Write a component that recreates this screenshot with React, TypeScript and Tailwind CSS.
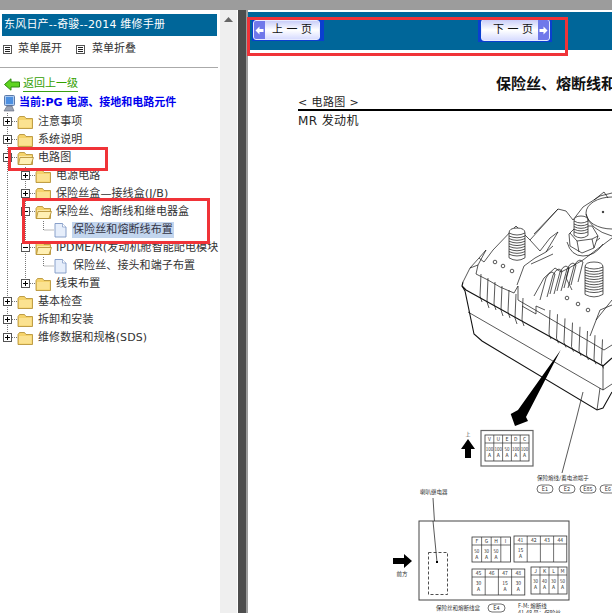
const FONT = "font-['DejaVu_Sans','Noto_Sans_CJK_SC',sans-serif]";

function Toggle({ x, open }: { x: number; open: boolean }) {
  return (
    <g>
      <rect x={x + 0.5} y={4.5} width={8} height={8} fill="#fff" stroke="#555" />
      <path d={`M${x + 2} 8.5H${x + 7}`} stroke="#000" />
      {!open && <path d={`M${x + 4.5} 6V11`} stroke="#000" />}
    </g>
  );
}

function Folder({ x, open }: { x: number; open: boolean }) {
  return (
    <g>
      <path d={`M${x} 5.5l1.5-2h5l1.5 2h6.5v10h-14.5z`} fill="#f5d36b" stroke="#b08a2c" strokeWidth="0.8" />
      <path d={`M${x + 1} 7h12.5v7.5h-12.5z`} fill={open ? "#fbe9a8" : "#fbe291"} />
      {open && <path d={`M${x + 2} 8.5h13.5l-2.5 7h-12.5z`} fill="#fff0b4" stroke="#b08a2c" strokeWidth="0.8" />}
    </g>
  );
}

function Doc({ x }: { x: number }) {
  return (
    <g>
      <path d={`M${x} 2.5h7.5l3.5 3.5v10h-11z`} fill="#e6eefb" stroke="#7d96c4" strokeWidth="0.9" />
      <path d={`M${x + 7.5} 2.5v3.5h3.5`} fill="#fff" stroke="#7d96c4" strokeWidth="0.7" />
    </g>
  );
}

type Row = {
  label: string;
  depth: 1 | 2 | 3;
  open?: boolean;
  last1?: boolean;
  last2?: boolean;
  selected?: boolean;
};

const rows: Row[] = [
  { label: "注意事项", depth: 1 },
  { label: "系统说明", depth: 1 },
  { label: "电路图", depth: 1, open: true },
  { label: "电源电路", depth: 2 },
  { label: "保险丝盒—接线盒(J/B)", depth: 2 },
  { label: "保险丝、熔断线和继电器盒", depth: 2, open: true },
  { label: "保险丝和熔断线布置", depth: 3, selected: true },
  { label: "IPDME/R(发动机舱智能配电模块", depth: 2, open: true },
  { label: "保险丝、接头和端子布置", depth: 3 },
  { label: "线束布置", depth: 2, last2: true },
  { label: "基本检查", depth: 1 },
  { label: "拆卸和安装", depth: 1 },
  { label: "维修数据和规格(SDS)", depth: 1, last1: true },
];

const dots = { stroke: "#777", strokeDasharray: "1 1" };

function TreeRow({ r }: { r: Row }) {
  const width = r.depth === 1 ? 36 : r.depth === 2 ? 54 : 71;
  return (
    <div className="flex h-[18px] items-center whitespace-nowrap">
      <svg width={width} height={18} viewBox={`0 0 ${width} 18`} className="shrink-0">
        <path d={r.last1 ? "M7.5 0V9" : "M7.5 0V18"} {...dots} fill="none" />
        {r.depth === 1 && <path d="M12 8.5H18" {...dots} />}
        {r.depth > 1 && <path d={r.last2 ? "M25.5 0V9" : "M25.5 0V18"} {...dots} />}
        {r.depth === 2 && <path d="M30 8.5H36" {...dots} />}
        {r.depth === 3 && <path d="M43.5 0V9H54" {...dots} fill="none" />}
        {r.depth === 1 && <Toggle x={3} open={!!r.open} />}
        {r.depth === 2 && <Toggle x={21} open={!!r.open} />}
        {r.depth === 1 && <Folder x={18} open={!!r.open} />}
        {r.depth === 2 && <Folder x={36} open={!!r.open} />}
        {r.depth === 3 && <Doc x={55} />}
      </svg>
      <span
        className={`ml-[1px] px-[1px] text-[11px] leading-[16px] tracking-[0.1px] ${r.selected ? "bg-[#c2d5ee] text-[#334]" : "text-[#333]"}`}
      >
        {r.label}
      </span>
    </div>
  );
}

function MenuIcon() {
  return (
    <svg width="9" height="9" viewBox="0 0 9 9" className="block shrink-0">
      <rect x="0.5" y="0.5" width="8" height="8" fill="#fff" stroke="#555" />
      <path d="M2 2.5H7M2 4.5H7M2 6.5H7" stroke="#222" />
    </svg>
  );
}

function NavArrow({ dir }: { dir: "l" | "r" }) {
  return (
    <div className="flex h-full w-[11px] shrink-0 items-center justify-center bg-[#6f78ea]">
      <svg width="9" height="9" viewBox="0 0 9 9">
        <path d={dir === "l" ? "M0.5 4.5L4.5 0.5V3H8.5V6H4.5V8.5Z" : "M8.5 4.5L4.5 0.5V3H0.5V6H4.5V8.5Z"} fill="#fff" />
      </svg>
    </div>
  );
}

const S = { fill: "none", stroke: "#111", strokeWidth: 0.7 };

function Bolt({ x, y, w, n }: { x: number; y: number; w: number; n: number }) {
  const threads = Array.from({ length: n }, (_, i) => i);
  return (
    <g {...S}>
      <path d={`M${x} ${y + 6}q0 -5 ${w / 2} -5t${w / 2} 5v${n * 2.6 + 4}q-${w / 2} 5 -${w} 0z`} fill="#fff" />
      <path d={`M${x} ${y + 6}q${w / 2} 4 ${w} 0`} />
      {threads.map((i) => (
        <path key={i} d={`M${x} ${y + 9 + i * 2.6}q${w / 2} 3.5 ${w} 0`} />
      ))}
    </g>
  );
}

function FuseTable({
  x,
  y,
  cw,
  rh,
  h,
  heads,
  vals,
}: {
  x: number;
  y: number;
  cw: number;
  rh: number;
  h: number;
  heads: string[];
  vals: string[];
}) {
  const small = cw < 10;
  return (
    <g>
      <rect x={x} y={y} width={cw * heads.length} height={h} fill="#fff" stroke="#333" strokeWidth="0.8" />
      <path d={`M${x} ${y + rh}h${cw * heads.length}`} stroke="#333" strokeWidth="0.7" />
      {heads.map((t, i) => (
        <g key={t}>
          {i > 0 && <path d={`M${x + i * cw} ${y}v${h}`} stroke="#333" strokeWidth="0.7" />}
          <text x={x + i * cw + cw / 2} y={y + rh - 2} fontSize="5" textAnchor="middle" fill="#333">
            {t}
          </text>
          {vals[i] && (
            <>
              <text
                x={x + i * cw + cw / 2}
                y={y + rh + 8}
                fontSize={small ? 4.5 : 5}
                textAnchor="middle"
                fill="#333"
              >
                {vals[i]}
              </text>
              <text x={x + i * cw + cw / 2} y={y + rh + 14} fontSize="5" textAnchor="middle" fill="#333">
                A
              </text>
            </>
          )}
        </g>
      ))}
    </g>
  );
}

function Oval({ x, y, w, t }: { x: number; y: number; w: number; t: string }) {
  return (
    <g>
      <rect x={x} y={y} width={w} height={8} rx={4} fill="#fff" stroke="#333" strokeWidth="0.7" />
      <text x={x + w / 2} y={y + 6} fontSize="5.5" textAnchor="middle" fill="#333">
        {t}
      </text>
    </g>
  );
}

function Diagram() {
  const leftFins = [0, 1, 2, 3, 4, 5, 6];
  const rightFins = [0, 1, 2, 3, 4, 5, 6, 7];
  const midFins = [0, 1, 2, 3, 4];
  return (
    <svg
      viewBox="248 131 364 482"
      width="364"
      height="482"
      className="block"
      fontFamily="'Noto Sans CJK SC','DejaVu Sans',sans-serif"
    >
      {/* fuse box body */}
      <g {...S}>
        <path d="M463 282L462 286L465 291L474 334L482 341L597 410L603 408L612 392" strokeWidth="1.1" />
        <path d="M462 286L466 290L603 366L612 358" strokeWidth="1.1" />
        <path d="M468 312L603 390L612 384" />
        <path d="M603 366V390M600 388L597 410" />
        <path d="M463 282L470 268L479 258L484 262L493 250L516 226L530 240L558 209L566 211L573 220L583 207L600 196L612 193" />
        <path d="M470 268L478 265L486 250L479 258" />
        <path d="M478 265L476 274L488 280L500 287L514 293L518 286" />
        <path d="M518 286V300L604 350L612 345" />
        <path d="M517 285L524 266L535 258L546 252L553 246M531 264L540 260L553 254" />
        <path d="M530 240L540 251L550 238L558 232M534 234L558 209" />
        <path d="M558 232L546 252" />
        <path d="M534 296L544 278L555 268L561 272L569 268L583 260L612 238" />
        <path d="M569 268L566 278L572 290" />
        <path d="M522 306L536 314V306L545 310" />
        <path d="M585 250L600 238" />
        <path d="M596 320L612 300M590 336L600 310L612 305" />
        {leftFins.map((i) => (
          <path key={i} d={`M${481 + i * 7} ${274 + i * 4}l-1 ${22 + (i % 2) * 2}l2 6`} />
        ))}
        {rightFins.map((i) => (
          <path key={i} d={`M${550 + i * 7.5} ${310 + i * 4.2}l-1 24l2 5`} />
        ))}
        {midFins.map((i) => (
          <path key={i} d={`M${540 + i * 7} ${300 - i * 3}l6 -22q3 -6 6 -6l3 2l-5 20`} />
        ))}
        {[
          [495, 262],
          [503, 266],
          [512, 271],
          [567, 298],
          [578, 304],
          [588, 310],
        ].map(([x, y]) => (
          <circle key={x} cx={x} cy={y} r={1.8} />
        ))}
        {/* relay/cap top right */}
        <ellipse cx="612" cy="213" rx="26" ry="16" fill="#fff" />
        <path d="M586 214q4 16 26 22" />
        <circle cx="603" cy="212" r="0.8" fill="#111" />
        <path d="M594 200L604 192L608 198" />
        {/* hex nut */}
        <path d="M569 234L577 226H592L598 236L594 248L582 253L570 246Z" fill="#fff" />
        <path d="M577 241L592 239M577 241L570 233M577 241L579 252M592 239L598 236M592 239L594 248" />
        <path d="M567 242q4 14 16 14t20 -12" />
      </g>
      <Bolt x={574} y={215} w={14} n={4} />
      <Bolt x={509} y={227} w={16} n={8} />
      <Bolt x={585} y={261} w={18} n={9} />

      {/* big arrow */}
      <path d="M560.7 350L526 417L528 421L515 426L510.7 414L518 410Z" fill="#000" />
      <path d="M583 392L576 420L562 473" {...S} />

      {/* up arrow + relay table */}
      <path d="M468 439L475 449H471V458H465V449H461Z" fill="#000" />
      <text x="468" y="436" fontSize="5" textAnchor="middle" fill="#444">
        上
      </text>
      <rect x="481" y="430.5" width="52" height="35.5" fill="#fff" stroke="#666" strokeWidth="1.2" />
      <FuseTable x={485} y={435} cw={8.8} rh={8} h={26} heads={["V", "U", "E", "D", "C"]} vals={["100", "100", "50", "100", "100"]} />

      <text x="537" y="480" fontSize="5.5" fill="#333">
        保险熔线/蓄电池端子
      </text>
      <Oval x={537} y={485} w={16} t="E1" />
      <Oval x={559} y={485} w={16} t="E2" />
      <Oval x={580} y={485} w={16} t="E85" />
      <Oval x={600} y={485} w={16} t="E6" />

      <text x="420" y="494" fontSize="5.5" fill="#333">
        喇叭继电器
      </text>
      <path d="M433 498L437 562" {...S} />
      <rect x="419" y="521" width="150" height="79" fill="#fff" stroke="#444" strokeWidth="1" />
      <path d="M433 521L437 562" {...S} />
      <rect x="428.5" y="552.5" width="19" height="42" fill="none" stroke="#222" strokeWidth="0.8" strokeDasharray="3 2" />
      <rect x="436" y="561" width="2" height="2" fill="#000" />
      <path d="M393 558H404V554L412 561L404 568V564H393Z" fill="#000" />
      <text x="402" y="576" fontSize="5.5" textAnchor="middle" fill="#333">
        前方
      </text>

      <FuseTable x={472} y={537} cw={9.6} rh={8} h={25} heads={["F", "G", "H", "I"]} vals={["50", "30", "50", ""]} />
      <FuseTable x={514} y={536} cw={13.2} rh={8} h={26} heads={["41", "42", "43", "44"]} vals={["15", "", "", ""]} />
      <FuseTable x={472} y={569} cw={13.2} rh={8} h={26} heads={["45", "46", "47", "48"]} vals={["30", "", "15", "30"]} />
      <FuseTable x={531} y={567} cw={9} rh={8} h={27} heads={["J", "K", "L", "M"]} vals={["30", "40", "30", "50"]} />

      <text x="436" y="610" fontSize="5.5" fill="#333">
        保险丝和熔断线盒
      </text>
      <Oval x={488} y={604} w={17} t="E4" />
      <text x="518" y="608" fontSize="5.5" fill="#333">
        F-M: 熔断线
      </text>
      <text x="518" y="615" fontSize="5.5" fill="#333">
        41-48 号：保险丝
      </text>
    </svg>
  );
}

export default function App() {
  return (
    <div className={`relative flex h-[613px] w-[612px] flex-col overflow-hidden bg-[#9c9c9c] ${FONT}`}>
      <div className="h-[10px] shrink-0" />
      <div className="flex min-h-0 flex-1">
        {/* left frame */}
        <div className="flex w-[238px] shrink-0 bg-white">
          <div className="w-[220px] overflow-hidden pl-[2px] pt-[4px]">
            <div className="flex h-[22px] w-[215px] items-center bg-[#006699] pl-[2px] text-[11px] tracking-[0.2px] whitespace-nowrap text-white">
              东风日产--奇骏--2014 维修手册
            </div>
            <div className="flex h-[22px] items-center pl-[1px] pt-[4px] text-[11px] text-[#333]">
              <MenuIcon />
              <span className="ml-[6px]">菜单展开</span>
              <span className="ml-[14px]">
                <MenuIcon />
              </span>
              <span className="ml-[7px]">菜单折叠</span>
            </div>
            <div className="-ml-[2px] mt-[9px] h-[1px] w-[218px] bg-[#aaaaaa]" />
            <div className="mb-[2px] mt-[8px] flex h-[16px] items-center pl-[2px] text-[11px]">
              <svg width="16" height="13" viewBox="0 0 16 13" className="shrink-0">
                <path d="M0.5 6.5L7 0.8V4H15.5V9H7V12.2Z" fill="#5fd420" stroke="#2f8a10" />
              </svg>
              <span className="ml-[3px] border-b border-[#3aa010] leading-[15px] text-[#33a000]">返回上一级</span>
            </div>
            <div className="-ml-[2px] flex h-[18px] items-center pl-[3px] whitespace-nowrap">
              <svg width="13" height="17" viewBox="0 0 13 17" className="shrink-0">
                <rect x="1.5" y="0.5" width="10" height="10" rx="1" fill="#a9c9f2" stroke="#5d7aa8" />
                <rect x="3" y="2" width="7" height="7" fill="#4c8fe0" />
                <path d="M4 11H9L11 16H1Z" fill="#9aa3b5" stroke="#5f6675" strokeWidth="0.6" />
              </svg>
              <span className="ml-[3px] text-[11px] font-bold text-[#0000ee]">当前:PG 电源、接地和电路元件</span>
            </div>
            <div className="-ml-[2px] pt-[1px]">
              {rows.map((r) => (
                <TreeRow key={r.label} r={r} />
              ))}
            </div>
          </div>
          <div className="flex w-[17px] shrink-0 justify-center bg-[#efefef] pt-[7px]">
            <svg width="9" height="5" viewBox="0 0 9 5">
              <path d="M4.5 0L9 5H0Z" fill="#666" />
            </svg>
          </div>
        </div>
        <div className="w-[8px] shrink-0 bg-[#4d4d4d]" />
        <div className="w-[2px] shrink-0 bg-[#9c9c9c]" />
        {/* right frame */}
        <div className="flex min-w-0 flex-1 flex-col overflow-hidden bg-white">
          <div className="mt-[2px] flex h-[38px] shrink-0 items-start bg-[#006699] pl-[4px] pt-[7px] text-[11px] text-[#111]">
            <div className="h-[22px] w-[72px] bg-[#0a3fd0] py-[1px] pl-[1px] pr-[4px]">
              <div className="flex h-full items-center overflow-hidden rounded-[3px] border border-[#e8ebff] bg-gradient-to-b from-[#c9cdf8] via-white to-[#d8dcff]">
                <NavArrow dir="l" />
                <span className="ml-[7px] whitespace-nowrap">上 一 页</span>
              </div>
            </div>
            <div className="ml-[154px] h-[24px] w-[74px] -translate-y-[1px] bg-[#0a3fd0] py-[1px] pl-[3px] pr-[2px]">
              <div className="flex h-full items-center justify-end overflow-hidden rounded-[3px] border border-[#e8ebff] bg-gradient-to-b from-[#c9cdf8] via-white to-[#d8dcff]">
                <span className="mr-[5px] whitespace-nowrap">下 一 页</span>
                <NavArrow dir="r" />
              </div>
            </div>
          </div>
          <div className="pl-[248px] pt-[25px] text-[15px] leading-[18px] font-bold whitespace-nowrap text-[#111]">
            保险丝、熔断线和继电器盒
          </div>
          <div className="ml-[50px] mt-[3px] border-b-2 border-black text-[11px] leading-[13px] tracking-[0.4px] text-[#222]">
            &lt; 电路图 &gt;
          </div>
          <div className="ml-[50px] text-[12px] leading-[20px] tracking-[0.4px] whitespace-nowrap text-[#222]">MR 发动机</div>
          <Diagram />
        </div>
      </div>

      {/* red annotation rectangles */}
      <div className="absolute left-[247px] top-[17px] h-[39px] w-[321px] border-[3px] border-[#f03338]" />
      <div className="absolute left-[8px] top-[147px] h-[24px] w-[100px] border-[3px] border-[#f03338]" />
      <div className="absolute left-[22px] top-[198px] h-[46px] w-[188px] border-[3px] border-[#f03338]" />
    </div>
  );
}
